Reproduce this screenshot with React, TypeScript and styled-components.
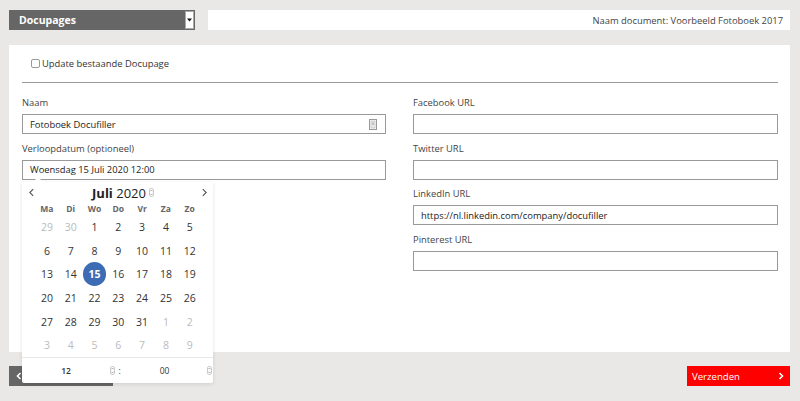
import React from "react";
import styled, { createGlobalStyle } from "styled-components";

const Global = createGlobalStyle`
  html, body { margin: 0; padding: 0; }
  body {
    background: #e9e8e6;
    font-family: "Open Sans", "Liberation Sans", sans-serif;
    color: #333;
    width: 800px;
    height: 401px;
    overflow: hidden;
  }
`;

const Page = styled.div`
  padding: 10px 10px 0 9px;
  display: flex;
  flex-direction: column;
`;

const TopBar = styled.div`
  display: flex;
  gap: 13px;
  height: 20px;
`;

const Dropdown = styled.div`
  width: 186px;
  background: #666;
  color: #fff;
  font-weight: 700;
  font-size: 10.5px;
  display: flex;
  align-items: center;
  padding-left: 10px;
  box-sizing: border-box;
  position: relative;
`;

const SelectArrow = styled.div`
  position: absolute;
  right: 1px;
  top: 1px;
  bottom: 1px;
  width: 9px;
  background: #fff;
  border: 1px solid #aaa;
  box-sizing: border-box;
  display: flex;
  align-items: center;
  justify-content: center;
`;

const DocName = styled.div`
  flex: 1;
  background: #fff;
  font-size: 9.4px;
  color: #444;
  display: flex;
  align-items: center;
  justify-content: flex-end;
  padding-right: 7px;
`;

const Panel = styled.div`
  margin-top: 15px;
  height: 307px;
  background: #fff;
  padding: 0 12px 0 13px;
  box-sizing: border-box;
`;

const CheckRow = styled.label`
  display: flex;
  align-items: center;
  gap: 2px;
  height: 37px;
  padding-left: 9px;
  font-size: 9.4px;
  color: #333;
  border-bottom: 1px solid #999;
`;

const Check = styled.span`
  width: 7px;
  height: 7px;
  border: 1px solid #999;
  border-radius: 2px;
  background: #fff;
`;

const Columns = styled.div`
  display: grid;
  grid-template-columns: 364px 365px;
  column-gap: 27px;
  padding-top: 12px;
`;

const Column = styled.div`
  display: flex;
  flex-direction: column;
`;

const Field = styled.div`
  display: flex;
  flex-direction: column;
  margin-bottom: 6.5px;
  position: relative;
`;

const Label = styled.div`
  font-size: 9.4px;
  line-height: 16px;
  color: #444;
  margin-bottom: 3px;
`;

const Input = styled.div`
  height: 20px;
  border: 1px solid #999;
  box-sizing: border-box;
  font-size: 9.4px;
  color: #222;
  display: flex;
  align-items: center;
  justify-content: space-between;
  padding: 0 8px 0 7px;
`;

const Calendar = styled.div`
  position: absolute;
  left: 0;
  top: 41px;
  width: 191px;
  height: 201px;
  background: #fff;
  box-shadow: 0 1px 4px rgba(0, 0, 0, 0.12);
  border-radius: 2px;
  z-index: 5;
  display: flex;
  flex-direction: column;
  &::before {
    content: "";
    position: absolute;
    top: -5px;
    left: 11px;
    border-left: 5px solid transparent;
    border-right: 5px solid transparent;
    border-bottom: 5px solid #fff;
  }
`;

const CalHeader = styled.div`
  height: 18px;
  margin-top: 2px;
  display: flex;
  align-items: center;
  justify-content: space-between;
  padding: 0 4px 0 5px;
`;

const Month = styled.div`
  font-size: 13px;
  color: #222;
  display: flex;
  align-items: center;
  gap: 3px;
  margin-left: 10px;
  b { font-weight: 700; }
`;

const Grid = styled.div`
  display: grid;
  grid-template-columns: repeat(7, 23.8px);
  padding-left: 13px;
`;

const WeekDay = styled.div`
  height: 14px;
  font-size: 8.5px;
  font-weight: 700;
  color: #666;
  display: flex;
  align-items: center;
  justify-content: center;
`;

const Day = styled.div<{ $muted?: boolean; $selected?: boolean }>`
  height: 23.6px;
  display: flex;
  align-items: center;
  justify-content: center;
  font-size: 10.5px;
  color: ${(p) => (p.$selected ? "#fff" : p.$muted ? "#bbb" : "#333")};
  font-weight: ${(p) => (p.$selected ? 700 : 400)};
  span {
    width: 24px;
    height: 24px;
    border-radius: 50%;
    display: flex;
    align-items: center;
    justify-content: center;
    background: ${(p) => (p.$selected ? "#3d6cb5" : "transparent")};
  }
`;

const TimeRow = styled.div`
  margin-top: auto;
  height: 25px;
  border-top: 1px solid #e8e8e8;
  display: flex;
  align-items: center;
  font-size: 8.5px;
  color: #333;
`;

const TimePart = styled.div<{ $w: number; $pr: number }>`
  width: ${(p) => p.$w}px;
  padding-right: ${(p) => p.$pr}px;
  display: flex;
  align-items: center;
  justify-content: space-between;
  box-sizing: border-box;
`;

const TimeValue = styled.span<{ $bold?: boolean }>`
  flex: 1;
  text-align: center;
  font-weight: ${(p) => (p.$bold ? 600 : 400)};
`;

const Colon = styled.span`
  width: 5px;
  text-align: center;
`;

const Footer = styled.div`
  margin-top: 14px;
  display: flex;
  justify-content: space-between;
  height: 20px;
`;

const BackButton = styled.div`
  width: 104px;
  background: #666;
  color: #fff;
  display: flex;
  align-items: center;
  padding-left: 6px;
  box-sizing: border-box;
`;

const SendButton = styled.div`
  width: 103px;
  background: #ff0000;
  color: #fff;
  font-size: 9.6px;
  display: flex;
  align-items: center;
  justify-content: space-between;
  padding: 0 5px 0 5px;
  box-sizing: border-box;
`;

const Chevron = ({ dir, color = "#fff", size = 8, w = 1.6 }: { dir: "l" | "r"; color?: string; size?: number; w?: number }) => (
  <svg width={size} height={size} viewBox="0 0 8 8">
    <path
      d={dir === "l" ? "M5.5 1 L2.5 4 L5.5 7" : "M2.5 1 L5.5 4 L2.5 7"}
      fill="none"
      stroke={color}
      strokeWidth={w}
    />
  </svg>
);

const Spinner = () => (
  <svg width="5" height="9" viewBox="0 0 5 9">
    <rect x="0.5" y="0.5" width="4" height="8" rx="1.5" fill="#fff" stroke="#ccc" />
    <path d="M1.3 3.3 L2.5 2 L3.7 3.3 M1.3 5.7 L2.5 7 L3.7 5.7" fill="none" stroke="#888" strokeWidth="0.7" />
  </svg>
);

const ContactIcon = () => (
  <svg width="8" height="11" viewBox="0 0 8 11">
    <rect x="0.5" y="0.5" width="7" height="10" fill="#fff" stroke="#999" />
    <rect x="2" y="2" width="4" height="7" fill="#eee" stroke="#aaa" strokeWidth="0.6" />
    <path d="M4 3.5 V6" stroke="#777" strokeWidth="0.8" />
  </svg>
);

const weekdays = ["Ma", "Di", "Wo", "Do", "Vr", "Za", "Zo"];
const days: { d: number; m?: boolean }[] = [
  { d: 29, m: true }, { d: 30, m: true },
  ...Array.from({ length: 31 }, (_, i) => ({ d: i + 1 })),
  ...Array.from({ length: 9 }, (_, i) => ({ d: i + 1, m: true })),
];

const leftFields = [
  { label: "Naam", value: "Fotoboek Docufiller", icon: true },
];
const rightFields = [
  { label: "Facebook URL", value: "" },
  { label: "Twitter URL", value: "" },
  { label: "LinkedIn URL", value: "https://nl.linkedin.com/company/docufiller" },
  { label: "Pinterest URL", value: "" },
];

export default function App() {
  return (
    <>
      <Global />
      <Page>
        <TopBar>
          <Dropdown>
            Docupages
            <SelectArrow>
              <svg width="5" height="4" viewBox="0 0 5 4">
                <path d="M0 0.5 H5 L2.5 3.5 Z" fill="#111" />
              </svg>
            </SelectArrow>
          </Dropdown>
          <DocName>Naam document: Voorbeeld Fotoboek 2017</DocName>
        </TopBar>
        <Panel>
          <CheckRow>
            <Check />
            Update bestaande Docupage
          </CheckRow>
          <Columns>
            <Column>
              {leftFields.map((f) => (
                <Field key={f.label}>
                  <Label>{f.label}</Label>
                  <Input>
                    {f.value}
                    {f.icon && <ContactIcon />}
                  </Input>
                </Field>
              ))}
              <Field>
                <Label>Verloopdatum (optioneel)</Label>
                <Input>Woensdag 15 Juli 2020 12:00</Input>
                <Calendar>
                  <CalHeader>
                    <Chevron dir="l" color="#555" size={9} w={1} />
                    <Month>
                      <span>
                        <b>Juli</b> 2020
                      </span>
                      <Spinner />
                    </Month>
                    <Chevron dir="r" color="#555" size={9} w={1} />
                  </CalHeader>
                  <Grid>
                    {weekdays.map((w) => (
                      <WeekDay key={w}>{w}</WeekDay>
                    ))}
                    {days.map((d, i) => (
                      <Day key={i} $muted={d.m} $selected={!d.m && d.d === 15}>
                        <span>{d.d}</span>
                      </Day>
                    ))}
                  </Grid>
                  <TimeRow>
                    <TimePart $w={95} $pr={2}>
                      <TimeValue $bold>12</TimeValue>
                      <Spinner />
                    </TimePart>
                    <Colon>:</Colon>
                    <TimePart $w={91} $pr={1}>
                      <TimeValue>00</TimeValue>
                      <Spinner />
                    </TimePart>
                  </TimeRow>
                </Calendar>
              </Field>
            </Column>
            <Column>
              {rightFields.map((f) => (
                <Field key={f.label}>
                  <Label>{f.label}</Label>
                  <Input>{f.value}</Input>
                </Field>
              ))}
            </Column>
          </Columns>
        </Panel>
        <Footer>
          <BackButton>
            <Chevron dir="l" />
          </BackButton>
          <SendButton>
            Verzenden
            <Chevron dir="r" />
          </SendButton>
        </Footer>
      </Page>
    </>
  );
}
